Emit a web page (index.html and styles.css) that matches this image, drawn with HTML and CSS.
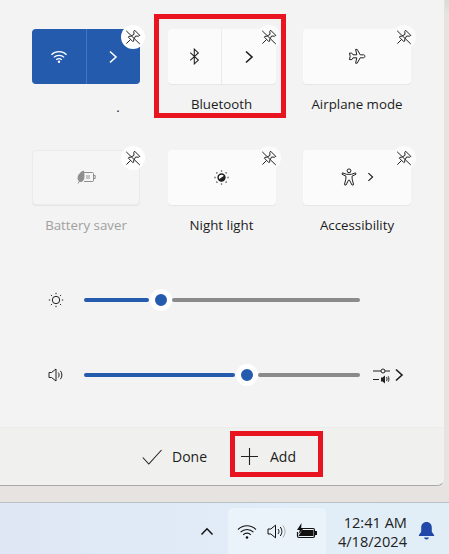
FILE: index.html
```html
<!DOCTYPE html>
<html lang="en">
<head>
  <meta charset="UTF-8">
  <title>Quick settings</title>
  <link rel="stylesheet" href="styles.css">
</head>
<body>
  <svg class="defs" width="0" height="0">
    <symbol id="pin" viewBox="0 0 16 16">
      <path d="M9.600 1.200 14.800 6.400 13.600 7.200 10.600 7 8.600 10.600 8.800 12 7.800 12.600 3.400 8.200 4 7.200 5.400 7.400 9 5.400 8.800 2.400Z M5.600 10.400 1.400 14.600 M1.200 1.800 14.800 15" fill="none" stroke="currentColor" stroke-width="1"/>
    </symbol>
    <symbol id="chev" viewBox="0 0 10 14">
      <path d="M2 1.500 8 7 2 12.500" fill="none" stroke="currentColor" stroke-width="1.600"/>
    </symbol>
  </svg>

  <div class="panel">
    <div class="tiles">
      <div class="tile">
        <div class="btn split on">
          <div class="part">
            <svg width="18" height="13" viewBox="0 0 16 12" fill="none" stroke="#fff" stroke-width="1.100"><path d="M1 4.400a10 10 0 0 1 14 0M3.200 6.800a7 7 0 0 1 9.600 0M5.400 9a4 4 0 0 1 5.200 0"/><circle cx="8" cy="10.900" r="1.100" fill="#fff" stroke="none"/></svg>
          </div>
          <div class="part"><svg class="chev-on" width="10" height="14"><use href="#chev"/></svg></div>
        </div>
        <span class="pin"><svg width="16" height="16"><use href="#pin"/></svg></span>
        <div class="label dot">.</div>
      </div>

      <div class="tile">
        <div class="btn split">
          <div class="part">
            <svg width="11" height="17" viewBox="0 0 10 16" fill="none" stroke="#222" stroke-width="1"><path d="M1 4.400 8.600 11.400 4.800 15V1L8.600 4.600 1 11.600"/></svg>
          </div>
          <div class="part"><svg width="10" height="14"><use href="#chev"/></svg></div>
        </div>
        <span class="pin"><svg width="16" height="16"><use href="#pin"/></svg></span>
        <div class="label">Bluetooth</div>
      </div>

      <div class="tile">
        <div class="btn">
          <svg width="18" height="18" viewBox="0 0 18 18" fill="none" stroke="#222" stroke-width="1"><path d="M7.600 1.400h1.600l3 5.400h3.200c2 0 2 3 0 3h-3.200l-3 5.400H7.600l1.200-5.400H5L3.800 11.600H1.400l.8-3.300-.8-3.200h2.400L5 6.800h3.800Z"/></svg>
        </div>
        <span class="pin"><svg width="16" height="16"><use href="#pin"/></svg></span>
        <div class="label">Airplane mode</div>
      </div>

      <div class="tile">
        <div class="btn off">
          <svg width="19" height="14" viewBox="0 0 19 14" fill="none" stroke="#8e8e8e" stroke-width="1"><path d="M7 2.500h8.500a1 1 0 0 1 1 1v7a1 1 0 0 1-1 1H7M17 5.500h1.200v3H17"/><rect x="9" y="5" width="4" height="4" fill="#c4c4c4" stroke="none"/><path d="M6.500 1C3 2.500 1.200 5 1 8c0 2 1 3.500 2.800 3.500S7 10 7 6.500C7 4.500 6.900 2.500 6.500 1ZM1 13.500l3-5" fill="#8e8e8e"/></svg>
        </div>
        <span class="pin"><svg width="16" height="16"><use href="#pin"/></svg></span>
        <div class="label muted">Battery saver</div>
      </div>

      <div class="tile">
        <div class="btn">
          <svg width="17" height="17" viewBox="0 0 17 17" fill="none" stroke="#222"><circle cx="8.500" cy="8.500" r="3.400" stroke-width="1.500"/><path d="M5.600 10.400a3.400 3.400 0 0 0 5.800-3.800Z" fill="#222" stroke="none"/><path d="M8.500 1.500v1M8.500 14.500v1M1.500 8.500h1M14.500 8.500h1M3.500 3.500l.8.8M12.700 12.700l.8.8M3.500 13.500l.8-.8M12.700 4.300l.8-.8" stroke-width="1.300"/></svg>
        </div>
        <span class="pin"><svg width="16" height="16"><use href="#pin"/></svg></span>
        <div class="label">Night light</div>
      </div>

      <div class="tile">
        <div class="btn access">
          <svg width="16" height="18" viewBox="0 0 16 18" fill="none" stroke="#222" stroke-width="1"><circle cx="8" cy="2.800" r="1.900"/><path d="M1.500 4.800 5.500 6.300h5l4-1.500.5 1.400-4 2 .2 3 1.400 5.500-1.600.4-2.500-5h-1l-2.500 5-1.600-.4L4.800 11.200l.2-3-4-2Z"/></svg>
          <svg width="7" height="10" viewBox="0 0 10 14"><use href="#chev"/></svg>
        </div>
        <span class="pin"><svg width="16" height="16"><use href="#pin"/></svg></span>
        <div class="label">Accessibility</div>
      </div>
    </div>

    <div class="sliders">
      <div class="slider-row bright">
        <svg class="slider-icon" width="16" height="16" viewBox="0 0 16 16" fill="none" stroke="#222" stroke-width="1"><circle cx="8" cy="8" r="3.700"/><path d="M8 .8v1.400M8 13.800v1.400M.8 8h1.400M13.800 8h1.400M2.900 2.900l1 1M12.100 12.100l1 1M2.900 13.100l1-1M12.100 3.900l1-1"/></svg>
        <div class="track">
          <div class="fill" style="width:65px"></div>
          <span class="thumb"></span>
          <div class="rest"></div>
        </div>
      </div>
      <div class="slider-row vol">
        <svg class="slider-icon" width="16" height="14" viewBox="0 0 16 14" fill="none" stroke="#222" stroke-width="1"><path d="M1 4.500h2.500L8 1v12L3.500 9.500H1ZM10.200 4.500c1.200 1.400 1.200 3.600 0 5M12.400 2.800c2 2.400 2 6 0 8.400"/></svg>
        <div class="track">
          <div class="fill" style="width:151px"></div>
          <span class="thumb"></span>
          <div class="rest"></div>
        </div>
        <div class="mixer">
          <svg width="18" height="17" viewBox="0 0 18 16" fill="none" stroke="#222" stroke-width="1"><path d="M0 3.500h8M12 3.500h5M0 12h6"/><circle cx="10" cy="3.500" r="2"/><path d="M8 10h1.500L12 8v8l-2.500-2H8Z" fill="#222" stroke="none"/><path d="M13.500 9.500c.7 1 .7 3 0 4M15.200 8.800c1 1.500 1 4 0 5.500"/></svg>
          <svg width="10" height="14"><use href="#chev"/></svg>
        </div>
      </div>
    </div>

    <div class="footer">
      <div class="action done">
        <svg width="20" height="16" viewBox="0 0 20 16" fill="none" stroke="#222" stroke-width="1.100"><path d="M.8 8.500 6.800 15 19.500 1"/></svg>
        <span>Done</span>
      </div>
      <div class="action add">
        <svg width="17" height="17" viewBox="0 0 17 17" fill="none" stroke="#222" stroke-width="1.100"><path d="M8.500 0v17M0 8.500h17"/></svg>
        <span>Add</span>
      </div>
    </div>
    <div class="redbox box-add"></div>
    <div class="redbox box-bt"></div>
  </div>

  <div class="taskbar">
    <svg class="caret" width="14" height="9" viewBox="0 0 14 9" fill="none" stroke="#111" stroke-width="1.500"><path d="M1.500 7.500 7 1.800l5.500 5.700"/></svg>
    <div class="tray">
      <svg width="20" height="15" viewBox="0 0 20 15" fill="none" stroke="#111" stroke-width="1.100"><path d="M1 5.500a12.700 12.700 0 0 1 18 0M3.600 8.200a9 9 0 0 1 12.800 0M6.200 10.800a5.200 5.200 0 0 1 7.600 0"/><circle cx="10" cy="13.500" r="1.300" fill="#111" stroke="none"/></svg>
      <svg width="20" height="15" viewBox="0 0 20 15" fill="none" stroke="#111" stroke-width="1"><path d="M1 5h2.800L8.500 1.200v12.600L3.800 10H1ZM11 5c1.300 1.500 1.300 3.500 0 5M13.200 3c2.200 2.700 2.200 6.300 0 9"/><path d="M15.800 1.500c3 3.600 3 8.400 0 12" stroke="#aaa"/></svg>
      <svg width="21" height="16" viewBox="0 0 21 16"><path d="M4 5.500h13a1.500 1.500 0 0 1 1.500 1.500v6a1.500 1.500 0 0 1-1.500 1.500H3A1.500 1.500 0 0 1 1.500 13V9" fill="none" stroke="#111" stroke-width="1.200"/><path d="M6 7h11.500v6H2.500Z" fill="#111"/><path d="M19 8h2v4h-2Z" fill="#111"/><path d="M5.500 0 1 7h2.800L2.500 11 8 5H5.200Z" fill="#111"/></svg>
    </div>
    <div class="clock">
      <div>12:41 AM</div>
      <div>4/18/2024</div>
    </div>
    <svg class="bell" width="17" height="20" viewBox="0 0 17 20"><path d="M8.500 1C5 1 3.200 3.600 3.200 6.500v4.200L.8 14.200c-.2.500 0 .8.500.8h14.400c.5 0 .7-.3.500-.8l-2.400-3.500V6.500C13.800 3.600 12 1 8.500 1ZM6 16.500c.4 1.300 1.300 2 2.500 2s2.100-.7 2.500-2Z" fill="#1f48a8"/></svg>
  </div>
</body>
</html>
```

FILE: styles.css
```css
* {
  box-sizing: border-box;
}

body {
  margin: 0;
  width: 449px;
  height: 554px;
  overflow: hidden;
  font-family: "Open Sans", "Noto Sans", sans-serif;
  font-size: 13.3px;
  color: #1c1c1c;
  background: linear-gradient(#d9d9d5, #e6e3e0 14px);
}

.defs {
  display: block;
  height: 0;
}

.panel {
  position: relative;
  width: 445px;
  height: 486px;
  background: #f3f3f3;
  border-right: 1px solid #e3e3e3;
  border-bottom: 1px solid #a9a9a9;
  border-radius: 0 0 8px 0;
  display: flex;
  flex-direction: column;
}

.tiles {
  display: grid;
  grid-template-columns: repeat(3, 108px);
  grid-auto-rows: 120.5px;
  column-gap: 27.5px;
  padding: 29px 0 0 32px;
}

.tile {
  position: relative;
}

.btn {
  height: 55px;
  background: #fbfbfb;
  border-radius: 4px;
  box-shadow: 0 1px 1px #e6e6e6;
  display: flex;
  align-items: center;
  justify-content: center;
}

.btn.off {
  background: #f5f5f5;
  border: 1px solid #ebebeb;
}

.btn.access {
  gap: 10px;
}

.split {
  justify-content: stretch;
}

.part {
  flex: 1;
  height: 100%;
  display: flex;
  align-items: center;
  justify-content: center;
}

.split .part:first-child {
  border-right: 1px solid #eaeaea;
}

.on {
  background: #255bad;
  box-shadow: none;
}

.on .part:first-child {
  border-right-color: #4675bd;
}

.on .part {
  color: #fff;
}

.chev-on {
  stroke-width: 2;
}

.pin {
  position: absolute;
  top: -4px;
  right: -5px;
  width: 24px;
  height: 24px;
  border-radius: 50%;
  background: #fff;
  color: #222;
  display: flex;
  align-items: center;
  justify-content: center;
}

.tile:nth-child(2) .pin,
.tile:nth-child(3) .pin,
.tile:nth-child(5) .pin,
.tile:nth-child(6) .pin {
  background: #fbfbfb;
}

.label {
  margin-top: 11px;
  line-height: 18px;
  text-align: center;
}

.dot {
  padding-left: 64px;
  margin-top: 14px;
  line-height: 18px;
}

.muted {
  color: #a0a0a0;
}

.sliders {
  padding-left: 48px;
  display: flex;
  flex-direction: column;
  gap: 59px;
  margin-top: 22px;
}

.slider-row {
  position: relative;
  display: flex;
  align-items: center;
  height: 16px;
}

.slider-icon {
  flex: none;
  width: 16px;
  margin-right: 20px;
}

.track {
  width: 276px;
  display: flex;
  align-items: center;
  flex: none;
}

.fill,
.rest {
  height: 4px;
  border-radius: 2px;
}

.fill {
  background: #255bad;
  flex: none;
}

.rest {
  flex: 1;
  background: #8a8a8a;
}

.thumb {
  flex: none;
  width: 22px;
  height: 22px;
  margin: 0 0 0 1px;
  border-radius: 50%;
  background: #255bad;
  border: 5px solid #fff;
}

.mixer {
  display: flex;
  align-items: center;
  margin-left: 13px;
  gap: 3px;
}

.footer {
  position: absolute;
  left: 0;
  right: 0;
  bottom: 0;
  height: 58px;
  background: #f0f0ef;
  border-top: 1px solid #ececec;
  border-radius: 0 0 8px 0;
  display: flex;
  align-items: center;
  padding-left: 142px;
}

.action {
  display: flex;
  align-items: center;
  font-size: 14px;
}

.done {
  gap: 10px;
  width: 99px;
}

.add {
  gap: 12px;
}

.redbox {
  position: absolute;
  border: 5px solid #e8141f;
}

.box-bt {
  left: 154px;
  top: 14px;
  width: 132px;
  height: 104px;
}

.box-add {
  left: 230px;
  top: 431px;
  width: 93px;
  height: 46px;
}

.taskbar {
  margin-top: 16px;
  height: 52px;
  background: linear-gradient(90deg, #dfe6f4, #e1edf8 60%, #e2eef6);
  border-top: 1px solid #b9c0c6;
  display: flex;
  align-items: center;
  padding-left: 200px;
  font-size: 14.6px;
}

.caret {
  margin-top: 6px;
}

.tray {
  margin-left: 14px;
  width: 98px;
  height: 47px;
  margin-top: 5px;
  background: #ebf3fa;
  border-radius: 5px 5px 0 0;
  display: flex;
  align-items: center;
  justify-content: space-evenly;
}

.clock {
  width: 81px;
  text-align: right;
  line-height: 19px;
  margin-top: 6px;
  color: #222;
}

.bell {
  margin-left: 11px;
  margin-top: 4px;
}
```
